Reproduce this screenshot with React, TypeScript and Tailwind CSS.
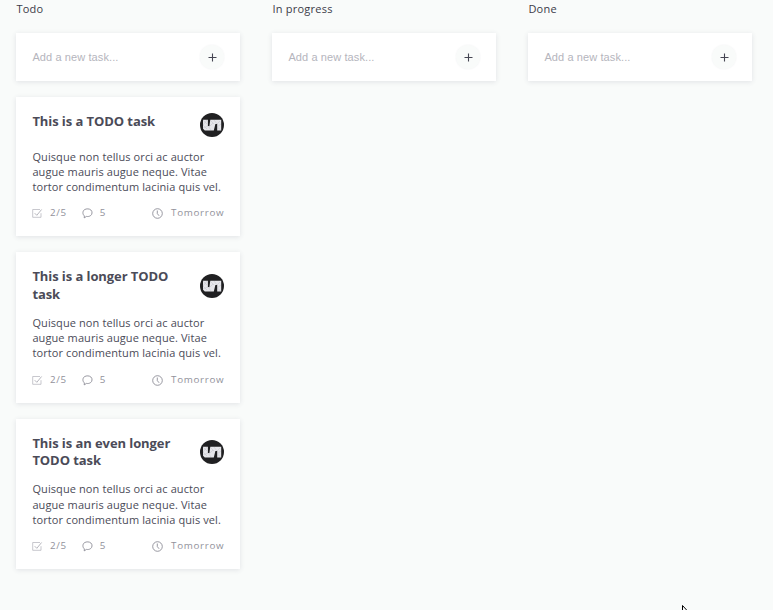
import React from "react";

function Avatar() {
  return (
    <svg viewBox="0 0 24 24" className="size-6 shrink-0">
      <circle cx="12" cy="12" r="12" fill="#202022" />
      <path
        d="M3 6.8H7.9V12.9H9.4L10.3 6.8H21.2V17.6H17.2V11H15.4L13.8 17.6H4.8L3 15.8Z"
        fill="#e6e6ea"
      />
      <path
        d="M3 7L7 11M7 7L3 12L7 16M3 15L8 13L11 17M9 14L13 10M11 8L14 11M14 7L17 11L20 8M21 11L17 14L21 17"
        stroke="#b4b4bb"
        strokeWidth=".35"
        fill="none"
      />
    </svg>
  );
}

function CheckIcon() {
  return (
    <svg viewBox="0 0 11 11" className="h-[11px] w-[11px]" fill="none" stroke="#a3a3ac" strokeWidth=".8">
      <path d="M9 5.2V9.3H.7V1.5H8" opacity=".75" />
      <path d="M2.7 5.2L4.8 7.3L9.6 1.5" />
    </svg>
  );
}

function CommentIcon() {
  return (
    <svg viewBox="0 0 11 11" className="h-[11px] w-[11px]" fill="none" stroke="#858590" strokeWidth=".85">
      <path d="M2.2 9.9L2.4 7.9C.3 6.2 .5 3 2.6 1.6C4.4.5 7.4.6 8.9 2C10.6 3.6 10.3 6.4 8.6 7.6C7.3 8.5 5.9 8.7 4.5 8.4Z" />
    </svg>
  );
}

function ClockIcon() {
  return (
    <svg viewBox="0 0 11 11" className="h-[11px] w-[11px]" fill="none" stroke="#858590" strokeWidth=".85">
      <circle cx="5.5" cy="5.5" r="4.8" />
      <path d="M5.3 2.5V5.6L7.1 7.8" />
    </svg>
  );
}

function AddTask() {
  return (
    <div className="flex h-12 items-center justify-between bg-white px-4 shadow-[0_1px_5px_rgba(50,50,80,0.12)]">
      <span className="font-['Liberation_Sans',sans-serif] text-[11px] tracking-[0.1px] text-[#b5b5bd]">
        Add a new task...
      </span>
      <button className="flex size-6 items-center justify-center rounded-full bg-[#f9fbfa] shadow-[0_0_2px_rgba(50,50,80,0.07)]">
        <svg viewBox="0 0 9 9" className="h-[9px] w-[9px]" stroke="#464653" strokeWidth="1.1">
          <path d="M4.5 .5V8.5M.5 4.5H8.5" />
        </svg>
      </button>
    </div>
  );
}

function Task({ title }: { title: string }) {
  return (
    <article className="bg-white p-4 shadow-[0_1px_5px_rgba(50,50,80,0.12)]">
      <div className="flex items-center justify-between">
        <h3 className="min-h-[24px] w-[144px] text-[13px] leading-[17.6px] font-bold tracking-[-0.08px] text-[#4b4b58]">
          {title}
        </h3>
        <Avatar />
      </div>
      <p className="mt-[11.7px] w-[196px] text-[11px] leading-[15.2px] tracking-[0.1px] text-[#4b4b58]">
        Quisque non tellus orci ac auctor augue mauris augue neque. Vitae tortor condimentum lacinia quis vel.
      </p>
      <div className="mt-[12.9px] flex h-[13px] items-center text-[9.8px] tracking-[0.7px] text-[#92929c]">
        <CheckIcon />
        <span className="ml-[6.5px]">2/5</span>
        <span className="ml-[15px] flex items-center gap-[7px]">
          <CommentIcon />5
        </span>
        <span className="ml-auto flex items-center gap-[7.6px]">
          <ClockIcon />Tomorrow
        </span>
      </div>
    </article>
  );
}

function Column({ title, tasks = [] }: { title: string; tasks?: string[] }) {
  return (
    <section className="flex w-[224px] flex-col gap-4">
      <h2 className="h-[17px] text-[11px] leading-[17px] font-medium tracking-[0.24px] text-[#3c3c49]">{title}</h2>
      <AddTask />
      {tasks.map((task) => (
        <Task key={task} title={task} />
      ))}
    </section>
  );
}

export default function App() {
  return (
    <main className="relative h-[610px] w-[773px] overflow-hidden bg-[#f9fbfa] font-['Open_Sans','Noto_Sans',sans-serif]">
      <div className="flex gap-8 px-[16.4px]">
        <Column
          title="Todo"
          tasks={["This is a TODO task", "This is a longer TODO task", "This is an even longer TODO task"]}
        />
        <Column title="In progress" />
        <Column title="Done" />
      </div>
      <svg viewBox="0 0 12 19" className="absolute top-[605px] left-[682px] h-[19px] w-3">
        <path d="M.5 .5V16L4 12.5L6.5 18L8.5 17L6 12H11Z" fill="white" stroke="black" />
      </svg>
    </main>
  );
}
